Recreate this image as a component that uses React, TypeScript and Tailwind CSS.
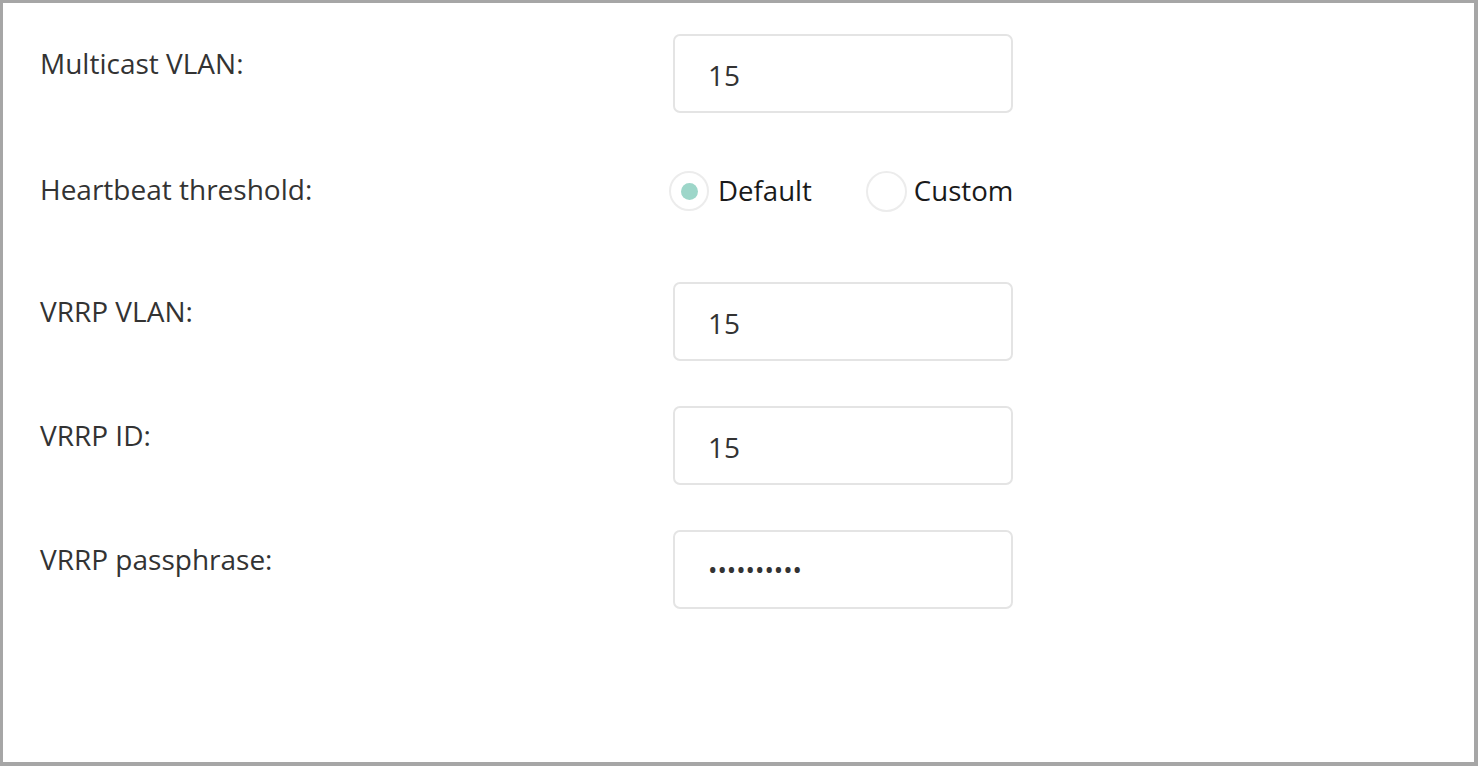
import React from "react";

const font = { fontFamily: '"Open Sans", "Noto Sans", sans-serif' };

function Label({ text, mt }: { text: string; mt: string }) {
  return (
    <div className={`w-[633px] shrink-0 text-[28px] leading-[36px] text-[#333333] ${mt}`}>{text}</div>
  );
}

function Field({ value }: { value: string }) {
  return (
    <div className="flex h-[79px] w-[340px] items-center rounded-[7px] border-2 border-[#e4e4e4] bg-white pl-[33px] pt-[3px] text-[28px] text-[#333333]">
      {value}
    </div>
  );
}

export default function App() {
  return (
    <div
      style={font}
      className="box-border h-[766px] w-[1478px] border-b-[4px] border-l-[3px] border-r-[4px] border-t-[3px] border-[#a6a6a6] bg-white pl-[37px] pt-[31px]"
    >
      <div className="flex">
        <Label text="Multicast VLAN:" mt="mt-[11px]" />
        <Field value="15" />
      </div>

      <div className="mt-[58px] flex">
        <Label text="Heartbeat threshold:" mt="mt-0" />
        <div className="-ml-[4px] flex h-[40px] items-center text-[27.6px] text-[#1a1a1a]">
          <div className="flex h-[40px] w-[40px] items-center justify-center rounded-full border-2 border-[#ececec]">
            <div className="h-[17px] w-[17px] rounded-full bg-[#9dd6c9]" />
          </div>
          <span className="ml-[9px]">Default</span>
          <div className="ml-[54px] h-[41px] w-[41px] rounded-full border-2 border-[#ececec]" />
          <span className="ml-[7px]">Custom</span>
        </div>
      </div>

      <div className="mt-[71px] flex">
        <Label text="VRRP VLAN:" mt="mt-[11px]" />
        <Field value="15" />
      </div>

      <div className="mt-[45px] flex">
        <Label text="VRRP ID:" mt="mt-[11px]" />
        <Field value="15" />
      </div>

      <div className="mt-[45px] flex">
        <Label text="VRRP passphrase:" mt="mt-[11px]" />
        <div className="flex h-[79px] w-[340px] items-center rounded-[7px] border-2 border-[#e4e4e4] bg-white pl-[33px] text-[25px] text-[#333333]">
          ••••••••••
        </div>
      </div>
    </div>
  );
}
